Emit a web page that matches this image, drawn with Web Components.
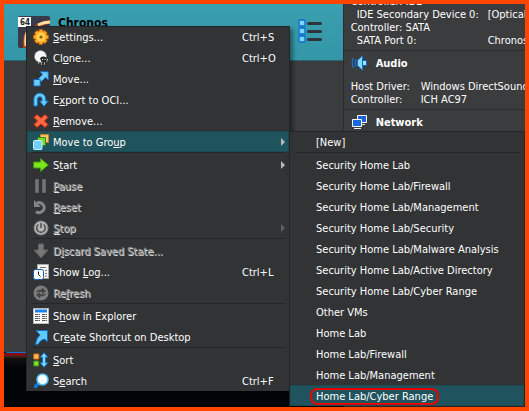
<!DOCTYPE html>
<html lang="en">
<head>
<meta charset="utf-8">
<title>Virtual machine manager</title>
<style>
html, body { margin: 0; height: 100%; }
body { font: 11px/13px "DejaVu Sans Condensed", "Noto Sans", sans-serif; color: #fff; background: #020508; }
</style>
</head>
<body>
<app-frame>
  <vm-list slot="list">
    <vm-card>Chronos</vm-card>
  </vm-list>
  <vm-details slot="details">
    <detail-section class="storage">
      <detail-row>Controller: IDE</detail-row>
      <detail-row sub wide>IDE Secondary Device 0:<span slot="value">[Optical</span></detail-row>
      <detail-row>Controller: SATA</detail-row>
      <detail-row sub wide>SATA Port 0:<span slot="value">Chronos</span></detail-row>
    </detail-section>
    <detail-section heading="Audio">
      <svg slot="icon" width="18" height="16" viewBox="0 0 18 16"><path d="M2.500 3Q0 8 2.500 13M5 4.500Q3.500 8 5 11.500" fill="none" stroke="#1474cf" stroke-width="1.300"/><path d="M6.500 5.500 11.500 .7v14.600L6.500 10.500z" fill="#7fdcff" stroke="#1474cf"/><path d="M11.500 5.500h4v5h-4z" fill="#9be6ff" stroke="#0d64bc"/></svg>
      <detail-row>Host Driver:<span slot="value">Windows DirectSound</span></detail-row>
      <detail-row>Controller:<span slot="value">ICH AC97</span></detail-row>
    </detail-section>
    <detail-section heading="Network">
      <svg slot="icon" width="18" height="16" viewBox="0 0 18 16"><path d="M6.500 1.500h9v7h-9z" fill="#1c62d4" stroke="#fff"/><path d="M9 10.500h5" stroke="#ddd"/><path d="M1.500 5.500h9v7h-9z" fill="#1769e0" stroke="#fff"/><path d="M3 14.500h7" stroke="#eee"/></svg>
    </detail-section>
  </vm-details>
  <pop-menu slot="menu" label="Machine">
    <menu-item shortcut="Ctrl+S"><svg slot="icon" width="16" height="16" viewBox="0 0 16 16"><g fill="#ffab24" stroke="#d25a08" stroke-width=".7"><path d="M6.300.6h3.400l.3 2 1.700-1.100 2.600 2.500-1.200 1.800 2.300.5v3.400l-2.300.5 1.200 1.800-2.500 2.500-1.800-1.200-.5 2.200H6.300l-.5-2.200L4 14.500 1.500 12l1.200-1.800L.5 9.700V6.300l2.200-.5L1.500 4 4 1.500l1.800 1.200z"/></g><circle cx="8" cy="8" r="4.500" fill="#ffd24b"/><circle cx="8" cy="8" r="1.600" fill="#9a551c"/></svg><u>S</u>ettings...</menu-item>
    <menu-item shortcut="Ctrl+O"><svg slot="icon" width="16" height="16" viewBox="0 0 16 16"><circle cx="7.500" cy="6.500" r="6" fill="#f7f7f7" stroke="#888" stroke-width=".6"/><path d="M7 8.500Q8 6 11 6.500l2.500 1V12H8.500z" fill="#2a2a2a"/><path d="M9 9.500h6" stroke="#ddd" stroke-dasharray="1 1.500"/><path d="M5.500 12v2M8.500 12v3M11.500 12v3M14 10v2" stroke="#999"/></svg>Cl<u>o</u>ne...</menu-item>
    <menu-item><svg slot="icon" width="16" height="16" viewBox="0 0 16 16"><path d="M7 .7h8.300V9L12.500 6.500 8.500 10.500 5.500 7.500 9.500 3.500z" fill="#69ccfa" stroke="#126bbd"/><path d="M.7 8.500h6.500V15H.7z" fill="#6ecbfa" stroke="#126bbd"/></svg><u>M</u>ove...</menu-item>
    <menu-item><svg slot="icon" width="16" height="16" viewBox="0 0 16 16"><path d="M.8 14V7a6 6 0 0 1 12 0v2h2.500L11 14.500 6.500 9H9V7a2.200 2.200 0 0 0-4.400 0v7z" fill="#66c9fa" stroke="#126bbd"/></svg>E<u>x</u>port to OCI...</menu-item>
    <menu-item><svg slot="icon" width="16" height="16" viewBox="0 0 16 16"><path d="m4 1.500 4 3.500 4-3.500 3 3L11.500 8l3.500 3.500-3 3L8 11l-4 3.500-3-3L4.500 8 1 4.500z" fill="#ff6844" stroke="#c3270d"/></svg><u>R</u>emove...</menu-item>
    <menu-item active arrow><svg slot="icon" width="16" height="16" viewBox="0 0 16 16"><path d="M7.500.5h8v8h-8z" fill="#ffc56a" stroke="#e07818"/><path d="M4.500 3.500h8v8h-8z" fill="#79d832" stroke="#288e14"/><rect x=".5" y="6.500" width="8.500" height="9" rx="1" fill="#71cffc" stroke="#d0f0ff"/></svg>Move to Gro<u>u</u>p</menu-item>
    <menu-separator></menu-separator>
    <menu-item arrow><svg slot="icon" width="16" height="16" viewBox="0 0 16 16"><path d="M.7 5H7.500V1.500L15.300 8l-7.800 6.500V11H.7z" fill="#7de51b" stroke="#3c9b0b"/></svg>S<u>t</u>art</menu-item>
    <menu-item disabled><svg slot="icon" width="16" height="16" viewBox="0 0 16 16"><path d="M2.500 1.500h3v13h-3zM9.500 1.500h3v13h-3z" fill="#747474" stroke="#666"/></svg><u>P</u>ause</menu-item>
    <menu-item disabled><svg slot="icon" width="16" height="16" viewBox="0 0 16 16"><path d="M4 4a5 5 0 1 1-1 8.500" fill="none" stroke="#858585" stroke-width="3"/><path d="M1 1v7h7z" fill="#858585"/></svg><u>R</u>eset</menu-item>
    <menu-item disabled arrow><svg slot="icon" width="16" height="16" viewBox="0 0 16 16"><circle cx="8" cy="8" r="7" fill="#b4b4b4" stroke="#808080"/><path d="M5.500 4.500a4.300 4.300 0 1 0 5 0M8 3v5" fill="none" stroke="#444" stroke-width="1.400"/></svg><u>S</u>top</menu-item>
    <menu-separator></menu-separator>
    <menu-item disabled><svg slot="icon" width="16" height="16" viewBox="0 0 16 16"><path d="M5.500 1h5v6H15l-7 8-7-8h4.500z" fill="#777" stroke="#606060"/></svg>D<u>i</u>scard Saved State...</menu-item>
    <menu-item shortcut="Ctrl+L"><svg slot="icon" width="16" height="16" viewBox="0 0 16 16"><path d="M4.500.5h11v14h-11z" fill="#f4f4f4" stroke="#aaa"/><path d="M7 3.500h6M12 6.500h2M12 9.500h2M12 12h2" stroke="#777"/><rect x=".5" y="5.500" width="10" height="10" rx="2" fill="#fff" stroke="#145fb5"/><path d="M5.500 7.500v3l2 2" fill="none" stroke="#111"/></svg>Show <u>L</u>og...</menu-item>
    <menu-item disabled><svg slot="icon" width="16" height="16" viewBox="0 0 16 16"><circle cx="8" cy="8" r="7.500" fill="#7c7c7c"/><path d="M3 7.500Q4 4.500 9 4.500V2.500l4 3.500-4 3V7Q6 6.500 3 7.500M13 8.500Q12 11.500 7 11.500v2L3 10l4-3v2Q10 9.500 13 8.500" fill="#454545"/></svg>Re<u>f</u>resh</menu-item>
    <menu-separator></menu-separator>
    <menu-item><svg slot="icon" width="16" height="16" viewBox="0 0 16 16"><path d="M.5.5h15v15H.5z" fill="#fff" stroke="#bbb"/><path d="M2 3h12" stroke="#1681ef" stroke-width="3"/><path d="M2 6.500h5M2 8.500h5M2 10.500h5M2 12.500h5M9 6.500h5M9 8.500h5M9 10.500h5M9 12.500h5" stroke="#555" stroke-dasharray="3 .5"/></svg>S<u>h</u>ow in Explorer</menu-item>
    <menu-item><svg slot="icon" width="16" height="16" viewBox="0 0 16 16"><path d="M3 1.500h11.500V13l-3-3Q7 11 5 15.500H2.500Q3 9 7 6z" fill="#62c9fb" stroke="#126bbd"/></svg>Cr<u>e</u>ate Shortcut on Desktop</menu-item>
    <menu-separator></menu-separator>
    <menu-item><svg slot="icon" width="16" height="16" viewBox="0 0 16 16"><path d="M.8 2h5v5h-5z" fill="#ffc14d" stroke="#e16d12"/><path d="M.8 9h5v5h-5z" fill="#83e52d" stroke="#318c14"/><path d="m11 .7 3.700 4.500h-2.200v5.600h2.200L11 15.300l-3.700-4.500h2.200V5.200H7.300z" fill="#7bd5ff" stroke="#1477cb"/></svg><u>S</u>ort</menu-item>
    <menu-item shortcut="Ctrl+F"><svg slot="icon" width="16" height="16" viewBox="0 0 16 16"><path d="m2.500 13.500 3-3" stroke="#1477d8" stroke-width="3.500" stroke-linecap="round"/><circle cx="9.500" cy="6.500" r="5.500" fill="#f4fcff" stroke="#53bdf4" stroke-width="1.500"/></svg>S<u>e</u>arch</menu-item>
  </pop-menu>
  <pop-menu slot="submenu" label="Move to Group">
    <menu-item>[New]</menu-item>
    <menu-separator></menu-separator>
    <menu-item>Security Home Lab</menu-item>
    <menu-item>Security Home Lab/Firewall</menu-item>
    <menu-item>Security Home Lab/Management</menu-item>
    <menu-item>Security Home Lab/Security</menu-item>
    <menu-item>Security Home Lab/Malware Analysis</menu-item>
    <menu-item>Security Home Lab/Active Directory</menu-item>
    <menu-item>Security Home Lab/Cyber Range</menu-item>
    <menu-item>Other VMs</menu-item>
    <menu-item>Home Lab</menu-item>
    <menu-item>Home Lab/Firewall</menu-item>
    <menu-item>Home Lab/Management</menu-item>
    <menu-item active marked>Home Lab/Cyber Range</menu-item>
  </pop-menu>
</app-frame>
<script>
const define = (name, html, setup) => customElements.define(name, class extends HTMLElement {
  constructor() {
    super();
    this.attachShadow({ mode: "open" }).innerHTML = html;
  }
  connectedCallback() { if (setup) setup(this, this.shadowRoot); }
});

define("app-frame", `<style>
  :host { display: grid; grid-template-columns: 65fr 35fr; box-sizing: border-box; min-height: 100vh; border: 4px solid #ff4500; position: relative; overflow: hidden; background: #020508; }
  ::slotted([slot=menu]) { position: absolute; left: 22px; top: 22px; width: 264px; }
  ::slotted([slot=submenu]) { position: absolute; left: 285px; top: 127px; width: 236px; }
</style><slot name="list"></slot><slot name="details"></slot><slot name="menu"></slot><slot name="submenu"></slot>`);

define("vm-list", `<style>
  :host { display: flex; flex-direction: column; }
  .panel { height: 349px; box-sizing: border-box; background: #3b3c3e; border-bottom: 1px solid #0b76d1; border-bottom-left-radius: 4px; }
  .desk { flex: 1; background: linear-gradient(#8b0a10 0 2px, #46261c 3px, #10100e 6px, #020508 14px); }
</style><div class="panel"><slot></slot></div><div class="desk"></div>`);

define("vm-card", `<style>
  :host { display: flex; height: 57px; box-sizing: border-box; padding: 12px 21px 0 14px; gap: 8px; background: linear-gradient(#3a9faf, #3496a6); border-bottom: 1px solid #25676f; color: #000; }
  b { flex: 1; font-size: 12px; line-height: 14px; }
  button { width: 24px; height: 24px; margin-top: 3px; padding: 0; border: 0; background: none; }
  svg { display: block; }
  text { font: bold 8px "DejaVu Sans Condensed", sans-serif; }
</style>
<svg width="32" height="32" viewBox="0 0 32 32"><rect width="32" height="32" rx="2" fill="#373a4a"/><path d="M16 10Q22 5 32 4v4q-6 0-10 4zM5 32Q4 22 8 14l5-1v19z" fill="#b33a18"/><path d="M20 9q6-3 12-3M8 30q-1-10 2-15" stroke="#ffe0a0" stroke-width="3" fill="none"/><rect width="13" height="10" y="1" fill="#fff"/><text x="2" y="9" fill="#222">64</text></svg>
<b><slot></slot></b>
<button aria-label="Machine tools"><svg width="24" height="24" viewBox="0 0 24 24"><g fill="#79d6ff" stroke="#0b6bd3" stroke-width="1.300"><rect x="1" y="1" width="6" height="6" rx="1"/><rect x="1" y="9" width="6" height="6" rx="1"/><rect x="1" y="17" width="6" height="6" rx="1"/></g><path d="M10.500 4.500h12M10.500 12.500h12M10.500 20.500h12" stroke="#303438" stroke-width="3" stroke-linecap="round"/></svg></button>`);

define("vm-details", `<style>
  :host { display: block; min-width: 0; background: #3b3c3e; border-left: 1px solid #2b2c2e; overflow: hidden; }
  ::slotted(.storage) { height: 46px; }
</style><slot></slot>`);

define("detail-section", `<style>
  :host { display: flex; flex-direction: column; justify-content: flex-end; box-sizing: border-box; overflow: hidden; padding: 0 0 3px 7px; }
  :host([heading]) { border-top: 1px solid #2b2c2e; }
  header { display: flex; align-items: center; gap: 7px; height: 24px; padding-bottom: 5px; }
  header + .rows { min-height: 26px; }
  h2 { margin: 0; font-size: 11px; line-height: 13px; }
</style><header><slot name="icon"></slot><h2></h2></header><div class="rows"><slot></slot></div>`,
(el, root) => {
  const title = el.getAttribute("heading");
  if (title) root.querySelector("h2").textContent = title; else root.querySelector("header").remove();
});

define("detail-row", `<style>
  :host { display: flex; line-height: 13px; white-space: nowrap; }
  :host([sub]) { padding-left: 6px; }
  .key { flex: 0 0 70px; }
  :host([wide]) .key { flex-basis: 131px; }
</style><span class="key"><slot></slot></span><slot name="value"></slot>`);

define("pop-menu", `<style>
  :host { display: block; box-sizing: border-box; background: #313335; border: solid #242527; border-width: 0 1px; box-shadow: inset 0 1px #242527, 3px 3px 4px #0006; }
</style><div role="menu"><slot></slot></div>`, (el, root) => root.querySelector("div").setAttribute("aria-label", el.getAttribute("label")));

define("menu-separator", `<style>
  :host { display: block; height: 2px; }
  hr { margin: 0 4px; border: 0; height: 1px; background: #252628; }
</style><hr>`);

define("menu-item", `<style>
  :host { display: block; }
  button { display: flex; align-items: center; width: 100%; height: 21px; padding: 1px 4px 0 6px; border: 0; background: none; color: inherit; font: inherit; text-align: left; white-space: nowrap; }
  .icon { flex: 0 0 20px; height: 16px; }
  .label { flex: 1; }
  .label, kbd { padding-top: 1px; }
  kbd { font: inherit; flex: 0 0 43px; }
  .arrow { width: 4px; height: 8px; background: #b9b9b9; clip-path: polygon(0 0, 100% 50%, 0 100%); }
  :host([active]) button { background: #1f535d; box-shadow: inset 0 0 0 1px #1b4a53; }
  :host([disabled]) .label { color: #909090; text-shadow: 1px 1px #e0e0e0; }
  :host([disabled]) .arrow { background: #606163; }
  :host([marked]) .label span { display: inline-block; box-shadow: 0 0 0 1px #f00, 0 0 0 2px #d00808; border-radius: 5px; padding: 0 4px; margin-left: -4px; }
</style><button role="menuitem"><span class="icon"><slot name="icon"></slot></span><span class="label"><span><slot></slot></span></span></button>`,
(el, root) => {
  const button = root.querySelector("button");
  button.disabled = el.hasAttribute("disabled");
  const key = el.getAttribute("shortcut");
  if (key) button.append(Object.assign(document.createElement("kbd"), { textContent: key }));
  if (el.hasAttribute("arrow")) button.append(Object.assign(document.createElement("i"), { className: "arrow" }));
});
</script>
</body>
</html>
